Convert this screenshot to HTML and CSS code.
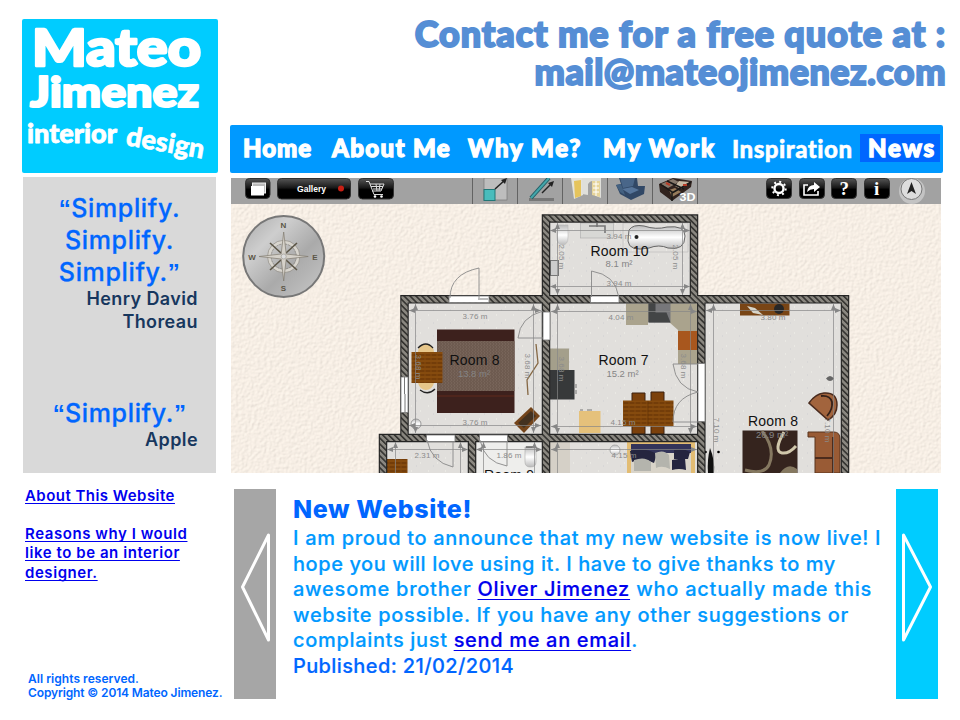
FILE: index.html
```
<!DOCTYPE html>
<html lang="en">
<head>
<meta charset="utf-8">
<title>Mateo Jimenez Interior Design</title>
<link rel="stylesheet" href="styles.css">
</head>
<body>
<div class="page">
  <aside class="sidebar">
    <svg class="logo" width="196" height="154" viewBox="22 19 196 154" role="img">
      <rect x="22" y="19" width="196" height="154" rx="2" fill="#00ccff"/>
      <g class="logo-text">
        <text x="32" y="66" font-size="51" textLength="169" lengthAdjust="spacingAndGlyphs" stroke-width="2.6">Mateo</text>
        <text x="30" y="107" font-size="42" textLength="169" lengthAdjust="spacingAndGlyphs" stroke-width="2.2">Jimenez</text>
        <text x="27" y="143" font-size="26" textLength="90" lengthAdjust="spacingAndGlyphs" stroke-width=".8">interior</text>
        <text x="125" y="145" font-size="27" textLength="79" lengthAdjust="spacingAndGlyphs" stroke-width=".6" transform="rotate(10 125 145)">design</text>
      </g>
    </svg>
    <section class="quotes">
      <blockquote>
        <p class="quote"><span class="mark">“</span>Simplify.<br>Simplify.<br>Simplify.<span class="mark">”</span></p>
        <p class="author">Henry David<br>Thoreau</p>
      </blockquote>
      <blockquote>
        <p class="quote"><span class="mark">“</span>Simplify.<span class="mark">”</span></p>
        <p class="author">Apple</p>
      </blockquote>
    </section>
    <nav class="side-links">
      <a href="#about">About This Website</a>
      <a href="#reasons">Reasons why I would<br>like to be an interior<br>designer.</a>
    </nav>
    <footer class="copyright"><div class="rights">All rights reserved.</div><div>Copyright © 2014 Mateo Jimenez.</div></footer>
  </aside>

  <main class="main">
    <header class="contact"><div class="contact-lead">Contact me for a free quote at :</div><div class="contact-mail">mail@mateojimenez.com</div></header>
    <nav class="menu">
      <a class="home">Home</a><a class="about">About Me</a><a class="why">Why Me?</a><a class="work">My Work</a><a class="inspiration">Inspiration</a><a class="news-link">News</a>
    </nav>

    <svg class="plan" width="710" height="295" viewBox="231 178 710 295">
      <defs>
        <filter id="paper" x="0" y="0" width="1" height="1">
          <feTurbulence type="fractalNoise" baseFrequency=".32" numOctaves="2" seed="4"/>
          <feDiffuseLighting lighting-color="#fff6ec" surfaceScale=".6" diffuseConstant="1.11"><feDistantLight azimuth="225" elevation="58"/></feDiffuseLighting>
        </filter>
        <pattern id="hatch" width="4.2" height="4.2" patternUnits="userSpaceOnUse" patternTransform="rotate(-45)"><rect width="4.2" height="4.2" fill="#8a8780"/><rect width="1.6" height="4.2" fill="#33322f"/></pattern>
        <pattern id="speck" width="17" height="13" patternUnits="userSpaceOnUse"><rect width="17" height="13" fill="#e1dfdc"/><path d="M3 3h1M12 8h1" stroke="#f4f3ec"/><path d="M8 11h1" stroke="#cfcfd2"/></pattern>
        <pattern id="wood" width="6" height="4" patternUnits="userSpaceOnUse"><rect width="6" height="4" fill="#7c430b"/><path d="M0 1h6" stroke="#8f5310"/><path d="M0 3h4" stroke="#693606"/></pattern>
        <pattern id="weave" width="3" height="3" patternUnits="userSpaceOnUse"><rect width="3" height="3" fill="#6e5b50"/><path d="M0 0h1M1 2h1" stroke="#806d61"/></pattern>
        <linearGradient id="key" x2="0" y2="1"><stop stop-color="#555"/><stop offset=".45" stop-color="#181818"/><stop offset=".55" stop-color="#000"/></linearGradient>
        <linearGradient id="metal" x2="1" y2="1"><stop stop-color="#a9a9a9"/><stop offset=".3" stop-color="#cecece"/><stop offset=".6" stop-color="#aaa"/><stop offset="1" stop-color="#c8c8c8"/></linearGradient>
        <linearGradient id="tub" x2="0" y2="1"><stop stop-color="#bbb"/><stop offset=".5" stop-color="#fff"/><stop offset="1" stop-color="#bbb"/></linearGradient>
        <marker id="arrow" markerWidth="8" markerHeight="6" refX="7" refY="3" orient="auto-start-reverse" markerUnits="userSpaceOnUse"><path d="M1 .5 7 3 1 5.500Z" fill="#868686"/></marker>
      </defs>
      <rect x="231" y="204" width="710" height="269" fill="#f3ece3"/>
      <rect x="231" y="204" width="710" height="269" filter="url(#paper)" opacity=".7"/>
      <rect x="231" y="178" width="710" height="26" fill="#a2a2a2"/>

      <!-- toolbar -->
      <g fill="url(#key)" stroke="#333">
        <rect x="245.500" y="178.500" width="24.500" height="20" rx="4"/><rect x="277.500" y="178.500" width="73" height="20.500" rx="4"/><rect x="358.500" y="178.500" width="35" height="20.500" rx="4"/>
        <rect x="766.500" y="178.500" width="25" height="20" rx="4"/><rect x="799.500" y="178.500" width="25" height="20" rx="4"/><rect x="831.500" y="178.500" width="25" height="20" rx="4"/><rect x="864.500" y="178.500" width="25" height="20" rx="4"/>
      </g>
      <rect x="252.500" y="183" width="13" height="10" fill="#bbb" stroke="#eee"/><rect x="251" y="186" width="13" height="9.500" fill="#fff"/>
      <text x="297" y="192" class="ui" font-size="9.500" textLength="29" lengthAdjust="spacingAndGlyphs">Gallery</text><circle cx="341" cy="188.500" r="3" fill="#c82015"/>
      <path d="M366 181.500h3l5 13h9M370 184h14l-3 7h-9M371 186.500h12M373 189h9M376 184l1 7M380 184l-1 7" fill="none" stroke="#ddd"/><circle cx="375" cy="196.500" r="1.300" fill="#fff"/><circle cx="381.500" cy="196.500" r="1.300" fill="#fff"/>
      <path d="M472.500 178v26M517.500 178v26M562.500 178v26M607.500 178v26M652.500 178v26M697.500 178v26" stroke="#636363"/>
      <rect x="484" y="178" width="23" height="22" fill="#bdbdbd" stroke="#777" stroke-width=".7"/><rect x="484" y="189.500" width="11" height="11" fill="#49bcbc" stroke="#277"/><path d="M495 189 505 180" stroke="#222" stroke-width="1.500"/><path d="m507 178-6 2 4 4Z" fill="#222"/>
      <rect x="529" y="198" width="25" height="3" fill="#777"/><path d="M531 198 549 178" stroke="#245e66" stroke-width="4"/><path d="M531 198 549 178" stroke="#43a6aa" stroke-width="2"/><path d="m542 193 9-9" stroke="#222" stroke-width="1.500"/><path d="m554 181-6 2 4 4Z" fill="#222"/>
      <path d="m571 178 3 21 9-4v-17Z" fill="#e5e3da"/><path d="m574 181 7-1v16l-6 2Z" fill="#e6c45c"/><path d="M582 178h19v20l-5-2v-12q-4-6-8 0v11l-6-1Z" fill="#dfdfda"/><path d="M592 181h8v16l-8-2Z" fill="#e6d49a"/><path d="M593 184h6M593 188h6M593 192h6M596 181v15" stroke="#fff"/>
      <path d="m619 178 18 0 1 8 7 0-1 8-13 6-11-6-4-9 5-1Z" fill="#314866"/><path d="m620 178 15 0-2 8-10 2Z" fill="#496689"/><path d="m622 189 10-2 7 3-9 4Z" fill="#57759a"/><path d="m616 185 5-1 4 11-5-3Z" fill="#446181"/>
      <path d="m659 184 14-6 19 3-1 6-19 14-12-9Z" fill="#31231e"/><path d="m661 184 12-5 6 3-11 6Z" fill="#85786b"/><path d="m679 181 11 1-9 7-6-3Z" fill="#c6b9a3"/><path d="m669 190 6-2 6 4-9 5Z" fill="#967b5b"/><path d="m660 184 12 8v9M667 181l17 8M691 182l-19 11" stroke="#191817" fill="none" stroke-width="1.500"/><path d="m666 183 4 2M683 185h4" stroke="#b63d28" stroke-width="2"/>
      <text x="679.500" y="201" class="ui" font-size="11" textLength="16" lengthAdjust="spacingAndGlyphs" fill="#e4f0fb">3D</text>
      <circle cx="779" cy="188.500" r="4.500" fill="none" stroke="#fff" stroke-width="2.400"/><circle cx="779" cy="188.500" r="6.700" fill="none" stroke="#fff" stroke-width="2" stroke-dasharray="2 3.262"/>
      <path d="M808 185h-4v10h14v-4" fill="none" stroke="#fff" stroke-width="1.600"/><path d="M807 192q1-7 7-7v-3l6 5-6 5v-3q-4 0-7 3Z" fill="#fff"/>
      <text x="839.500" y="195" class="glyph" font-size="19">?</text><text x="874" y="195" class="glyph" font-size="19">i</text>
      <circle cx="912" cy="191" r="13" fill="#c3c3c3"/><circle cx="911.500" cy="189" r="10.500" fill="#ddd" stroke="#777"/><path d="m911.500 182 4.500 12-4.500-3-4.500 3Z" fill="#222"/>

      <!-- compass -->
      <circle cx="283.700" cy="256.500" r="40.500" fill="url(#metal)" stroke="#777" stroke-width="2"/>
      <circle cx="283.700" cy="256.500" r="14.500" fill="none" stroke="#d8d5ce" stroke-width="3"/><circle cx="283.700" cy="256.500" r="16.200" fill="none" stroke="#8b877e" stroke-width=".6"/><circle cx="283.700" cy="256.500" r="12.500" fill="none" stroke="#8b877e" stroke-width=".8" stroke-dasharray="2 1"/>
      <path d="m270 243 11 10M297 243l-11 10M270 270l11-10M297 270l-11-10" stroke="#5b5546" stroke-width="1.600"/>
      <path d="m283.700 232 2.500 22 22 2.500-22 2.500-2.500 22-2.500-22-22-2.500 22-2.500Z" fill="#d5d1c9" stroke="#817b70" stroke-width=".7"/><circle cx="283.700" cy="256.500" r="2.500" fill="#ddd" stroke="#8b877e" stroke-width=".5"/>
      <g class="points"><text x="283.500" y="227.500">N</text><text x="315" y="259.500">E</text><text x="283.500" y="291">S</text><text x="252" y="259.500">W</text></g>

      <!-- floors -->
      <path d="M550 222.500h140V299h151v175H386V438h18V299h146Z" fill="url(#speck)"/>
      <path d="M477 441h65v33h-65Z" fill="#eeeeec"/><path d="M550 442h20v31h-20Z" fill="#d5d0c7"/>

      <!-- furniture -->
      <path d="M418 352q1-8 8-8t8 8M418 383q2 7 8 7t8-7" fill="#e6c68a"/><path d="M418 348q8-8 15 0M420 390q8 6 15-1" fill="none" stroke="#222" stroke-width="1.300"/>
      <rect x="437" y="329.500" width="77.500" height="83.500" fill="#3d211d"/><rect x="437" y="341" width="77.500" height="50" fill="url(#weave)"/><path d="M437 396h77" stroke="#612b1d"/>
      <rect x="411.500" y="352" width="31" height="31" fill="url(#wood)"/>
      <path d="m531 407 9 9-16 17-10-10Z" fill="#74441a"/><path d="m531 411 5 5-12 12-6-5Z" fill="#44311f"/>
      <path d="m536 344 2 19-11 17 1 15" fill="none" stroke="#866844" stroke-width="1.300"/>
      <circle cx="416" cy="424" r="5" fill="url(#tub)" stroke="#999"/>
      <rect x="386.500" y="459" width="21" height="14" fill="url(#wood)"/>
      <path d="M525 447h11v15q0 5-5.500 5t-5.500-5Z" fill="url(#tub)" stroke="#aaa" stroke-width=".6"/><path d="M526 447h9" stroke="#333"/>
      <path d="M557 225h11v12q0 8-5.500 8t-5.500-8Z" fill="url(#tub)" stroke="#bbb" stroke-width=".6"/>
      <rect x="580.500" y="223" width="33" height="15" fill="#d8d8d5" stroke="#aaa" stroke-width=".6"/><path d="M589 226h16v7M597 223v4" stroke="#777" fill="none" stroke-width="1.600"/>
      <path d="M623 223h65v29h-65Z" fill="none" stroke="#bbb" stroke-width=".6"/><path d="M629 230q4-6 15-4 12 4 23 1 18-2 18 9 0 15-17 12-9-4-19 0-20 4-21-7Z" fill="url(#tub)" stroke="#666"/><circle cx="636.500" cy="237" r="2" fill="#222"/>
      <rect x="550.500" y="260.500" width="8" height="15" fill="#ccc" stroke="#777"/>
      <path d="M626 303.500h71V364h-19v-34l-9-8h-21v3h-22Z" fill="#aaa38d"/><path d="M648.500 303.500h22v19h-22Z" fill="#77777a"/><path d="M648.500 303.500h7v9h11l4 10h-22Z" fill="#434546"/>
      <rect x="678" y="331" width="19.500" height="19" fill="#a8571e"/>
      <rect x="550" y="348.500" width="19" height="22" fill="#a49f8b"/><rect x="550" y="370" width="24.500" height="29.500" fill="#37393a"/><path d="M576 384v4M576 394v-4" stroke="#777"/>
      <rect x="579" y="411" width="21.500" height="22" fill="#e5c17b"/><path d="M580 410h3M587 410h5" stroke="#777"/>
      <path d="M632 393h13v9h-13ZM651 392h13v10h-13ZM632 425h13v9h-13ZM651 425h13v9h-13Z" fill="#7b400b" stroke="#3c2010" stroke-width="1"/><rect x="623" y="400.500" width="50.500" height="25.500" fill="url(#wood)"/><path d="M648 401v24" stroke="#5b3009" stroke-width=".6"/>
      <rect x="627" y="442" width="68" height="31" fill="#e2bc73"/><rect x="631" y="444" width="60" height="29" fill="#d9d4c9"/><path d="M631 444h60v9h-60Z" fill="#33345a"/><path d="M630 451q14-4 27 3l-3 9q-11-6-22-1ZM674 450q8-3 16 2l-2 7h-14ZM672 460l13-2 1 12q-7-2-14 0Z" fill="#25253f"/><path d="M655 453q9-4 14 2l1 14q-8-4-14-1ZM634 460q11-4 17 2v9h-17Z" fill="#b4b4ad"/>
      <circle cx="615" cy="450" r="5" fill="url(#tub)" stroke="#aaa"/>
      <rect x="740" y="303.500" width="49.500" height="12" fill="#794515"/><path d="m747 306 8 2 8 7-10-2Z" fill="#d8d5c9"/><circle cx="779" cy="309" r="5" fill="#272727"/>
      <path d="M826 378.500q4-5 8 0-4 5-8 0Z" fill="#666"/>
      <path d="M809 403q6-9 15-10 13-1 13 12 0 10-9 15Z" fill="#a2643d" stroke="#4a2b1e" stroke-width="1.500"/><path d="M821 396q9-1 11 6 1 7-5 14" fill="none" stroke="#332019" stroke-width="1.800"/>
      <path d="M808 432h26q6 0 6 7v34h-25v-36h-7Z" fill="#995b35" stroke="#59351f"/><path d="M833 437v36M815 458h18" stroke="#4c2b1c" stroke-width="2"/>
      <rect x="742.500" y="430.500" width="55" height="43" fill="#35241e"/><path d="M762 431q14 18 7 34-5 10-24 5" fill="none" stroke="#857860" stroke-width="3"/><path d="M784 432q-11 19-2 21 7 1 14-7" fill="none" stroke="#d0c7ab" stroke-width="3"/><path d="M780 473q8-11 17-4v4Z" fill="#857860"/>
      <path d="M710 448q5 12 4 25h-6q-1-13 2-25" fill="#111"/><circle cx="705.500" cy="452" r="1.300"/><circle cx="718.500" cy="452" r="1.300"/>

      <!-- walls -->
      <path d="M404.500 438V299.300H845V480M546 480V218.500H694V299M701.300 299V480M383 480V438H701.300M472 438V480" fill="none" stroke="#242424" stroke-width="8.500"/>
      <path d="M404.500 438V299.300H845V480M546 480V218.500H694V299M701.300 299V480M383 480V438H701.300M472 438V480" fill="none" stroke="url(#hatch)" stroke-width="6.200"/>

      <!-- openings -->
      <g fill="#fff" stroke="#777" stroke-width=".8">
        <rect x="449" y="296" width="40" height="6.500"/><rect x="401" y="377" width="7" height="35.500"/><rect x="543" y="312" width="7" height="28"/><rect x="590.500" y="296" width="28.500" height="6.500"/><rect x="698" y="363.500" width="7" height="58"/><rect x="426.500" y="435" width="28.500" height="6.500"/><rect x="479.500" y="435" width="28" height="6.500"/>
      </g>
      <path d="M404.500 377v17M405 394v18M478 299h10" stroke="#777"/>
      <path d="M450 298q0-24 29-30v30M591.500 297v-26q24 4 27 25M543 338h-25q2-21 25-27M427 440q4 22 26 27v-26M480 440q4 22 27 26v-25M698 364h-25q3 24 25 28-25 6-25 30h25" fill="none" stroke="#888" stroke-width=".9"/>

      <!-- dimensions -->
      <g stroke="#868686"><path class="dim" d="M409 310.500h132"/><path class="dim" d="M409 425.500h132"/><path class="dim" d="M415.500 304v129"/><path class="dim" d="M533.500 304v129"/><path class="dim" d="M550 230.500h140"/><path class="dim" d="M550 286.500h140"/><path class="dim" d="M557.500 223v72"/><path class="dim" d="M682.500 223v72"/><path class="dim" d="M551 311.500h146"/><path class="dim" d="M551 426.500h146"/><path class="dim" d="M557.500 304v130"/><path class="dim" d="M690.500 304v130"/><path class="dim" d="M706 310.500h135"/><path class="dim" d="M713.500 304v190"/><path class="dim" d="M833.500 304v190"/><path class="dim" d="M387 449.500h81"/><path class="dim" d="M476 449.500h66"/><path class="dim" d="M551 449.500h146"/><path class="dim" d="M395.500 442v60"/><path class="dim" d="M460.500 442v60"/><path class="dim" d="M483.500 442v60"/><path class="dim" d="M534.500 442v60"/><path class="dim" d="M557.500 442v60"/></g>
      <g class="measure">
        <text x="475" y="319">3.76 m</text><text x="475" y="424.500">3.76 m</text><text x="619" y="239">3.94 m</text><text x="619" y="285.500">3.94 m</text><text x="621" y="319.500">4.04 m</text><text x="623" y="425">4.15 m</text><text x="773" y="320">3.80 m</text><text x="427" y="458">2.31 m</text><text x="509" y="458">1.86 m</text><text x="624" y="458">4.15 m</text>
        <text transform="translate(416 367) rotate(90)">3.68 m</text><text transform="translate(525 366) rotate(90)">3.68 m</text><text transform="translate(559 257) rotate(90)">2.05 m</text><text transform="translate(673 257) rotate(90)">2.05 m</text><text transform="translate(559 369) rotate(90)">3.68 m</text><text transform="translate(681 366) rotate(90)">3.68 m</text><text transform="translate(714 430) rotate(90)">7.10 m</text><text transform="translate(825 430) rotate(90)">7.10 m</text>
      </g>
      <g class="area"><text x="619" y="267">8.1 m²</text><text x="622.500" y="377">15.2 m²</text><text x="474" y="377">13.8 m²</text><text x="772" y="438">26.9 m²</text></g>
      <g class="room"><text x="619.500" y="256" textLength="58">Room 10</text><text x="474.500" y="365" textLength="50">Room 8</text><text x="623.500" y="365" textLength="50">Room 7</text><text x="773" y="426" textLength="50">Room 8</text><text x="509" y="480" textLength="50">Room 9</text></g>
    </svg>

    <section class="news">
      <a class="step step-prev" href="#prev"><svg width="42" height="210" viewBox="0 0 42 210"><path d="M34.500 46V151L8.500 98Z" fill="none" stroke="#fff" stroke-width="3" stroke-linejoin="round"/></svg></a>
      <article class="story">
        <h1>New Website!</h1>
        <div class="line l1">I am proud to announce that my new website is now live! I</div>
        <div class="line l2">hope you will love using it. I have to give thanks to my</div>
        <div class="line l3">awesome brother <a href="#oliver">Oliver Jimenez</a> who actually made this</div>
        <div class="line l4">website possible. If you have any other suggestions or</div>
        <div class="line l5">complaints just <a href="#email">send me an email</a>.</div>
        <div class="line date">Published: 21/02/2014</div>
      </article>
      <a class="step step-next" href="#next"><svg width="42" height="210" viewBox="0 0 42 210"><path d="M7.500 46V151L34.500 98Z" fill="none" stroke="#fff" stroke-width="3" stroke-linejoin="round"/></svg></a>
    </section>
  </main>
</div>
</body>
</html>
```
FILE: styles.css
```
* { box-sizing: border-box; }
body { margin: 0; background: #fff; font-family: Inter, "Liberation Sans", sans-serif; }
p, h1, blockquote { margin: 0; }
svg { display: block; }

.page { display: flex; width: 960px; height: 720px; padding: 0 14px 0 22px; gap: 12px; overflow: hidden; }
.sidebar { flex: 0 0 196px; min-width: 0; height: 720px; padding-top: 19px; display: flex; flex-direction: column; }
.main { flex: 0 0 716px; min-width: 0; padding-top: 14px; }

.logo { flex: none; }
.logo-text { font-family: Lato, sans-serif; font-weight: 900; fill: #fff; stroke: #fff; stroke-linejoin: round; }

.quotes { flex: none; width: 193px; height: 296px; margin: 4px 0 0 1px; padding-top: 15px; background: #d9d9d9; display: flex; flex-direction: column; gap: 64px; }
.quote { font-size: 25px; font-weight: 500; line-height: 32px; letter-spacing: .65px; text-align: center; color: #0066ff; -webkit-text-stroke: .3px #0066ff; }
.mark { font: 700 24px/1 "Liberation Sans", sans-serif; letter-spacing: .3px; -webkit-text-stroke: 0; }
.author { margin-top: -1px; padding-right: 18px; font-size: 18px; font-weight: 600; line-height: 23px; letter-spacing: .4px; text-align: right; color: #17375e; }

.side-links { margin: 13px 0 0 3px; display: flex; flex-direction: column; gap: 19px; }
.side-links a { color: #0000ee; font-size: 15px; font-weight: 600; line-height: 19.2px; letter-spacing: .56px; white-space: nowrap; text-decoration-thickness: 1px; text-underline-offset: 2px; text-decoration-skip-ink: none; }
.side-links a:first-child { letter-spacing: .46px; }
.copyright { margin: auto 0 20px 6px; color: #0066ff; font-size: 12px; font-weight: 600; line-height: 14px; letter-spacing: -.13px; white-space: nowrap; }
.rights { letter-spacing: .04px; }

.contact { height: 111px; font: 900 36px/38px Lato, sans-serif; color: #558ed5; text-align: right; white-space: nowrap; -webkit-text-stroke: 1.9px #558ed5; }
.contact-lead { letter-spacing: .93px; }
.contact-mail { letter-spacing: .48px; }

.menu { width: 713px; height: 48px; padding: 9px 3px 0 13px; display: grid; grid-template-columns: 89px 136px 135px 129px 128px 80px; background: #0099ff; border-radius: 2px; font: 900 24px/28px Lato, sans-serif; color: #fff; -webkit-text-stroke: 1.3px #fff; white-space: nowrap; }
.home { letter-spacing: 1px; }
.about { letter-spacing: 1.36px; }
.why { letter-spacing: 1.7px; }
.work { letter-spacing: 1.8px; }
.inspiration { letter-spacing: .5px; padding-top: 1px; -webkit-text-stroke-width: .5px; }
.news-link { height: 28px; padding-left: 8px; background: #0066ff; letter-spacing: 1.8px; }

.plan { margin: 5px 0 0 1px; }
.ui { font-family: "Liberation Sans", sans-serif; font-weight: 700; fill: #fff; }
.glyph { font-family: "Liberation Serif", serif; font-weight: 700; fill: #fff; }
.points { font: 700 8px "Liberation Sans", sans-serif; fill: #5b5546; text-anchor: middle; }
.measure { font: 8px "Liberation Sans", sans-serif; fill: #8b8b8b; text-anchor: middle; letter-spacing: .1px; }
.area { font: 9.500px "Liberation Sans", sans-serif; fill: #858585; text-anchor: middle; }
.room { font: 14px "Liberation Sans", sans-serif; fill: #111; text-anchor: middle; }
.dim { marker-start: url(#arrow); marker-end: url(#arrow); stroke-width: .7; }

.news { width: 704px; height: 210px; margin: 16px 0 0 4px; display: flex; }
.step { flex: 0 0 42px; }
.step-prev { background: #a6a6a6; }
.step-next { background: #00ccff; }
.story { flex: 1; padding: 6px 0 0 17px; white-space: nowrap; }
.story h1 { margin-bottom: 2px; font-size: 25px; font-weight: 800; line-height: 29px; letter-spacing: .6px; color: #0066ff; }
.line { font-size: 20px; font-weight: 500; line-height: 25.6px; color: #0099ff; -webkit-text-stroke: .2px; }
.line a { color: #0000ee; text-decoration-thickness: 1px; text-underline-offset: 3px; text-decoration-skip-ink: none; }
.l1 { letter-spacing: .68px; }
.l2 { letter-spacing: .57px; }
.l3 { letter-spacing: .75px; }
.l4 { letter-spacing: .68px; }
.l5 { letter-spacing: .67px; }
.date { letter-spacing: .38px; color: #0066ff; }
```
